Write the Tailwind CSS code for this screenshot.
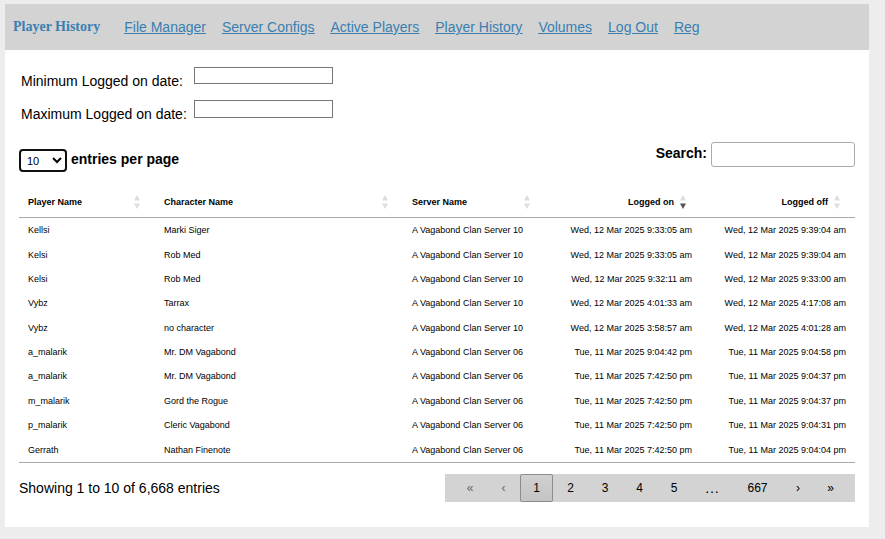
<!DOCTYPE html>
<html lang="en">
<head>
<meta charset="utf-8">
<title>Player History</title>
<meta name="viewport" content="width=device-width, initial-scale=1">
<script src="https://cdn.jsdelivr.net/npm/@tailwindcss/browser@4"></script>
</head>
<body class="bg-[#ededed] pt-1 pr-4 pb-3 pl-[5px] font-['Liberation_Sans',Arial,sans-serif] text-[14px] leading-[18px] text-black">
<main class="bg-white pb-[25px]">
  <nav class="flex h-[46px] items-center bg-[#d3d3d3] pl-2 text-[#3a7fb0]">
    <h1 class="mr-6 font-['Liberation_Serif',serif] text-[14px] font-bold">Player History</h1>
    <div class="flex gap-4 underline">
      <a href="#">File Manager</a>
      <a href="#">Server Configs</a>
      <a href="#">Active Players</a>
      <a href="#">Player History</a>
      <a href="#">Volumes</a>
      <a href="#">Log Out</a>
      <a href="#">Reg</a>
    </div>
  </nav>

  <form class="grid grid-cols-[173px_139px] gap-y-[15px] pt-[17px] pl-4">
    <label for="min" class="-mb-[5px] whitespace-nowrap pt-[5px]">Minimum Logged on date:</label>
    <input id="min" type="text" class="h-[17px] border border-[#767676] bg-white px-1 text-xs">
    <label for="max" class="whitespace-nowrap pt-[5px]">Maximum Logged on date:</label>
    <input id="max" type="text" class="h-[18px] border border-[#767676] bg-white px-1 text-xs">
  </form>

  <div class="px-[14px]">
    <div class="mt-[19px] flex items-start justify-between font-bold">
      <div class="flex items-center gap-1 pt-[7px]">
        <select id="len" class="h-[23px] w-12 rounded-[4px] border-2 border-[#101010] bg-white pl-[2px] text-[11px] font-normal text-black">
          <option>10</option><option>25</option><option>50</option><option>100</option>
        </select>
        <label for="len" class="-mt-1">entries per page</label>
      </div>
      <div class="flex items-center gap-1">
        <label for="search" class="-mt-[3px]">Search:</label>
        <input id="search" type="search" class="h-[25px] w-36 rounded-[3px] border border-[#aaa] px-1 font-normal">
      </div>
    </div>

    <table class="mt-4 h-[275px] w-full table-fixed border-collapse border-b border-[#aaa] text-[9px] leading-3">
      <colgroup>
        <col class="w-[136px]"><col><col class="w-[142px]"><col class="w-[156px]"><col class="w-[154px]">
      </colgroup>
      <thead>
        <tr class="h-[29px] border-b border-[#aaa] text-left">
          <th class="px-[9px]"><div class="flex items-center justify-between pr-[6px]">Player Name<svg class="h-[14px] w-[6px]" viewBox="0 0 6 14" fill="#ddd"><path d="M0 5.500 3 0l3 5.500zM0 8.500h6L3 14z"/></svg></div></th>
          <th class="px-[9px]"><div class="flex items-center justify-between pr-[6px]">Character Name<svg class="h-[14px] w-[6px]" viewBox="0 0 6 14" fill="#ddd"><path d="M0 5.500 3 0l3 5.500zM0 8.500h6L3 14z"/></svg></div></th>
          <th class="px-[9px]"><div class="flex items-center justify-between pr-[6px]">Server Name<svg class="h-[14px] w-[6px]" viewBox="0 0 6 14" fill="#ddd"><path d="M0 5.500 3 0l3 5.500zM0 8.500h6L3 14z"/></svg></div></th>
          <th class="px-[9px]"><div class="flex items-center justify-end gap-[6px] pr-[6px]">Logged on<svg class="h-[14px] w-[6px]" viewBox="0 0 6 14"><path fill="#ddd" d="M0 5.500 3 0l3 5.500z"/><path fill="#555" d="M0 8.500h6L3 14z"/></svg></div></th>
          <th class="px-[9px]"><div class="flex items-center justify-end gap-[6px] pr-[6px]">Logged off<svg class="h-[14px] w-[6px]" viewBox="0 0 6 14" fill="#ddd"><path d="M0 5.500 3 0l3 5.500zM0 8.500h6L3 14z"/></svg></div></th>
        </tr>
      </thead>
      <tbody class="[&_td]:px-[9px] [&_td]:whitespace-nowrap [&_td:nth-child(n+4)]:text-right">
        <tr><td>Kellsi</td><td>Marki Siger</td><td>A Vagabond Clan Server 10</td><td>Wed, 12 Mar 2025 9:33:05 am</td><td>Wed, 12 Mar 2025 9:39:04 am</td></tr>
        <tr><td>Kelsi</td><td>Rob Med</td><td>A Vagabond Clan Server 10</td><td>Wed, 12 Mar 2025 9:33:05 am</td><td>Wed, 12 Mar 2025 9:39:04 am</td></tr>
        <tr><td>Kelsi</td><td>Rob Med</td><td>A Vagabond Clan Server 10</td><td>Wed, 12 Mar 2025 9:32:11 am</td><td>Wed, 12 Mar 2025 9:33:00 am</td></tr>
        <tr><td>Vybz</td><td>Tarrax</td><td>A Vagabond Clan Server 10</td><td>Wed, 12 Mar 2025 4:01:33 am</td><td>Wed, 12 Mar 2025 4:17:08 am</td></tr>
        <tr><td>Vybz</td><td>no character</td><td>A Vagabond Clan Server 10</td><td>Wed, 12 Mar 2025 3:58:57 am</td><td>Wed, 12 Mar 2025 4:01:28 am</td></tr>
        <tr><td>a_malarik</td><td>Mr. DM Vagabond</td><td>A Vagabond Clan Server 06</td><td>Tue, 11 Mar 2025 9:04:42 pm</td><td>Tue, 11 Mar 2025 9:04:58 pm</td></tr>
        <tr><td>a_malarik</td><td>Mr. DM Vagabond</td><td>A Vagabond Clan Server 06</td><td>Tue, 11 Mar 2025 7:42:50 pm</td><td>Tue, 11 Mar 2025 9:04:37 pm</td></tr>
        <tr><td>m_malarik</td><td>Gord the Rogue</td><td>A Vagabond Clan Server 06</td><td>Tue, 11 Mar 2025 7:42:50 pm</td><td>Tue, 11 Mar 2025 9:04:37 pm</td></tr>
        <tr><td>p_malarik</td><td>Cleric Vagabond</td><td>A Vagabond Clan Server 06</td><td>Tue, 11 Mar 2025 7:42:50 pm</td><td>Tue, 11 Mar 2025 9:04:31 pm</td></tr>
        <tr><td>Gerrath</td><td>Nathan Finenote</td><td>A Vagabond Clan Server 06</td><td>Tue, 11 Mar 2025 7:42:50 pm</td><td>Tue, 11 Mar 2025 9:04:04 pm</td></tr>
      </tbody>
    </table>

    <div class="mt-[11px] flex items-center justify-between">
      <p>Showing 1 to 10 of 6,668 entries</p>
      <div class="flex h-7 items-center bg-[#d3d3d3] px-2 text-[12px]">
        <button disabled class="h-7 w-[34px] text-[#666]">«</button>
        <button disabled class="h-7 w-[33px] text-[#666]">‹</button>
        <button class="h-7 w-[33px] rounded-[2px] border border-[#8c8c8c] bg-linear-to-b from-[#d0d0d0] to-[#c4c4c4]">1</button>
        <button class="h-7 w-[35px]">2</button>
        <button class="h-7 w-[34px]">3</button>
        <button class="h-7 w-[35px]">4</button>
        <button class="h-7 w-[34px]">5</button>
        <span class="w-[42px] text-center text-[15px]">…</span>
        <button class="h-7 w-[49px]">667</button>
        <button class="h-7 w-[32px]">›</button>
        <button class="h-7 w-[33px]">»</button>
      </div>
    </div>
  </div>
</main>
</body>
</html>
